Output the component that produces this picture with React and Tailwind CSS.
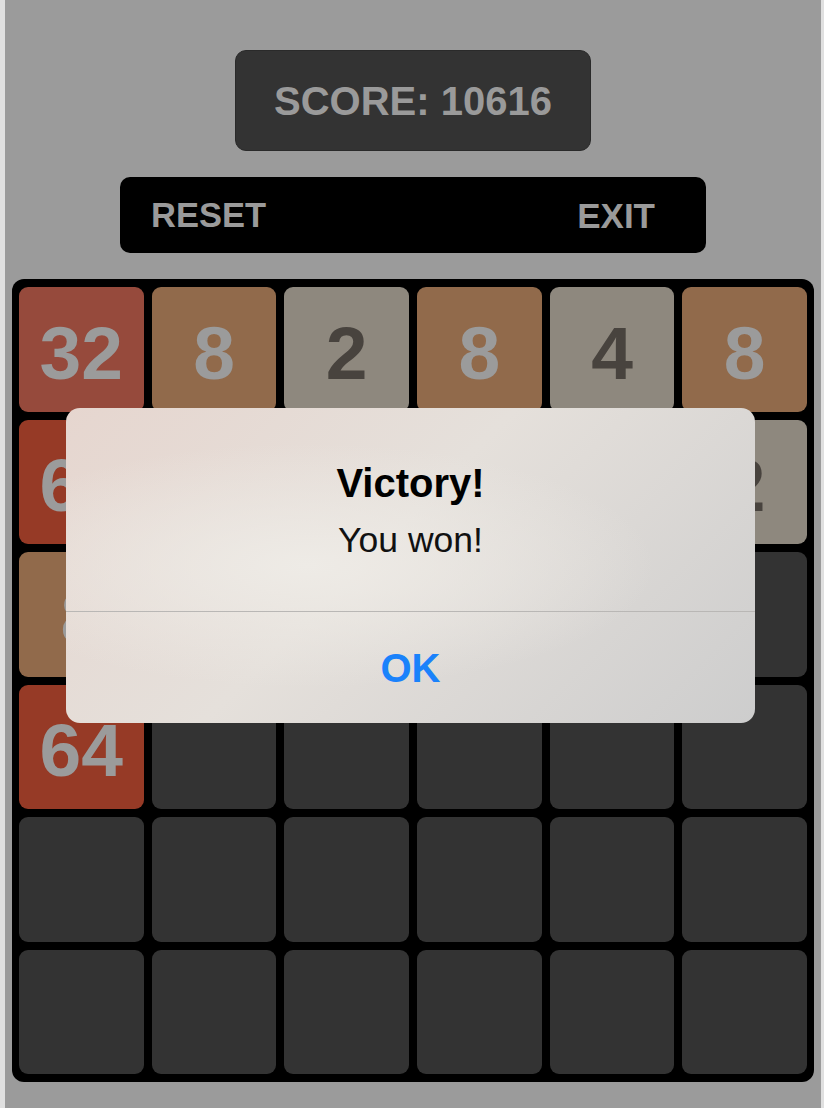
import React from 'react';

const font = { fontFamily: '"Liberation Sans", Arial, sans-serif' };

const tileStyles = {
  0: 'bg-[#333333]',
  2: 'bg-[#8e887e] text-[#48433e]',
  4: 'bg-[#8e887e] text-[#48433e]',
  8: 'bg-[#916a4b] text-[#9b9b9b]',
  32: 'bg-[#964a3c] text-[#9b9b9b]',
  64: 'bg-[#963a26] text-[#9b9b9b]',
};

// tiles hidden behind the dialog are left empty
const board = [
  [32, 8, 2, 8, 4, 8],
  [64, 0, 0, 0, 0, 2],
  [8, 0, 0, 0, 0, 0],
  [64, 0, 0, 0, 0, 0],
  [0, 0, 0, 0, 0, 0],
  [0, 0, 0, 0, 0, 0],
];

const Tile = ({ value }) => (
  <div
    className={`h-[124.5px] rounded-[9px] flex items-center justify-center pt-2 text-[75px] font-bold leading-none ${tileStyles[value]}`}
  >
    {value > 0 ? value : ''}
  </div>
);

const App = () => {
  return (
    <div className="w-[824px] h-[1108px] flex" style={font}>
      <div className="w-[5px] bg-[#e0e0e0]" />
      <div className="relative flex-1 bg-[#9b9b9b] flex flex-col items-center pt-[50px]">
        <div className="w-[356px] h-[101px] rounded-[11px] bg-[#333333] border border-[#2a2a2a] flex items-center justify-center">
          <span className="text-[40px] font-bold leading-none text-[#9a9a9a]">SCORE: 10616</span>
        </div>

        <div className="mt-[26px] w-[586px] h-[76px] rounded-[10px] bg-black flex items-center justify-between pl-[31px] pr-[51px]">
          <span className="text-[34.5px] font-bold leading-none text-[#9a9a9a]">RESET</span>
          <span className="text-[35px] font-bold leading-none text-[#9a9a9a]">EXIT</span>
        </div>

        <div className="mt-[26px] w-[802px] rounded-[12px] bg-black px-[7px] py-2 grid grid-cols-6 gap-2">
          {board.flat().map((v, i) => (
            <Tile key={i} value={v} />
          ))}
        </div>

        <div className="absolute left-[61px] top-[408px] w-[689px] h-[315px] rounded-[14px] overflow-hidden flex flex-col bg-[radial-gradient(ellipse_at_35%_50%,#eeebe6_0%,rgba(238,235,230,0)_55%),linear-gradient(135deg,#e6d6cf_0%,#e5e0db_45%,#cdcdcd_100%)]">
          <div className="h-[203px] flex flex-col items-center pt-[55px]">
            <div className="text-[40px] font-bold leading-none text-black">Victory!</div>
            <div className="mt-[20px] text-[35.5px] leading-none text-[#111]">You won!</div>
          </div>
          <div className="h-px bg-[#b9b7b5]" />
          <div className="flex-1 flex items-center justify-center">
            <span className="text-[40px] font-bold leading-none text-[#1a82fb]">OK</span>
          </div>
        </div>
      </div>
      <div className="w-[3px] bg-[#e0e0e0]" />
    </div>
  );
};

export default App;
